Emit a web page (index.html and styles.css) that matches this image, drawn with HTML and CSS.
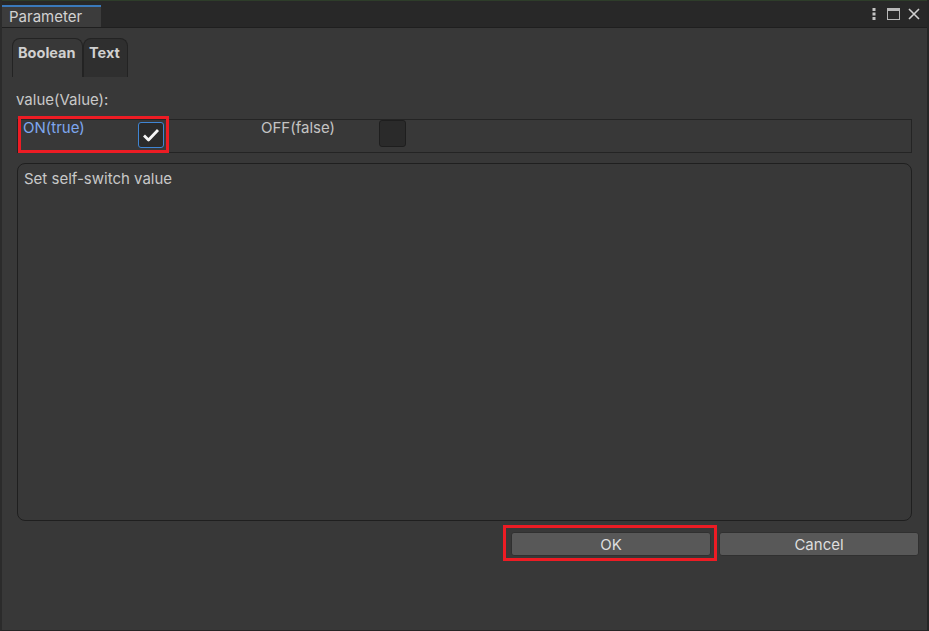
FILE: index.html
```html
<!DOCTYPE html>
<html lang="en">
  <head>
    <meta name="viewport" content="width=device-width, initial-scale=1.0" />
    <link rel="stylesheet" href="styles.css">
  </head>
  <body>
    <div class="window">
      <div class="titlebar">
        <div class="title-tab">Parameter</div>
        <div class="title-icons">
          <svg class="kebab" width="6" height="14" viewBox="0 0 6 14">
            <rect x="1.5" y="1" width="3" height="3" fill="#c4c4c4" />
            <rect x="1.5" y="5.5" width="3" height="3" fill="#c4c4c4" />
            <rect x="1.5" y="10" width="3" height="3" fill="#c4c4c4" />
          </svg>
          <svg width="13" height="12" viewBox="0 0 13 12">
            <rect x="0.5" y="0.5" width="12" height="11" fill="none" stroke="#b8b8b8" />
            <rect x="0.5" y="0.5" width="12" height="2.5" fill="#b8b8b8" />
          </svg>
          <svg width="12" height="12" viewBox="0 0 12 12">
            <path d="M1 1 L11 11 M11 1 L1 11" stroke="#d0d0d0" stroke-width="1.6" />
          </svg>
        </div>
      </div>

      <div class="content">
        <div class="tabs">
          <div class="tab active">Boolean</div>
          <div class="tab">Text</div>
        </div>

        <div class="field-label">value(Value):</div>
        <div class="choice-row">
          <div class="option marked">
            <span class="option-label focused">ON(true)</span>
            <span class="checkbox checked">
              <svg width="18" height="14" viewBox="0 0 18 14">
                <path d="M2 7.5 L6.5 12 L16 2" fill="none" stroke="#f4f4f4" stroke-width="2.8" stroke-linejoin="round" />
              </svg>
            </span>
          </div>
          <div class="option off">
            <span class="option-label">OFF(false)</span>
            <span class="checkbox"></span>
          </div>
        </div>

        <div class="description">Set self-switch value</div>

        <div class="buttons">
          <span class="marked-btn"><button class="btn ok">OK</button></span>
          <button class="btn cancel">Cancel</button>
        </div>
      </div>
    </div>
  </body>
</html>
```

FILE: styles.css
```css
html, body {
  margin: 0;
  padding: 0;
  background-color: #383838;
}

body {
  width: 929px;
  height: 631px;
  overflow: hidden;
  font-family: Inter, "Noto Sans", sans-serif;
  font-size: 15px;
  color: #c4c4c4;
}

.window {
  height: 630px;
  border-left: 2px solid #2b2b2b;
  border-right: 2px solid #262626;
  border-bottom: 1px solid #262626;
  background-color: #383838;
  display: flex;
  flex-direction: column;
}

/* Title strip */
.titlebar {
  height: 28px;
  background-color: #282828;
  border-top: 1px solid #2e3d2a;
  border-bottom: 1px solid #1f1f1f;
  box-sizing: border-box;
  display: flex;
  align-items: flex-end;
  justify-content: space-between;
}

.title-tab {
  width: 99px;
  height: 22px;
  box-sizing: border-box;
  background-color: #3c3c3c;
  border-top: 2px solid #3a79bb;
  padding-left: 7px;
  font-size: 15px;
  line-height: 19px;
  color: #d2d2d2;
}

.title-icons {
  display: flex;
  align-items: center;
  gap: 8px;
  height: 26px;
  padding-right: 7px;
}

.kebab {
  margin-right: 2px;
}

/* Body */
.content {
  flex: 1;
  display: flex;
  flex-direction: column;
  padding: 10px 8px 0 15px;
}

.tabs {
  display: flex;
  margin-left: -5px;
  gap: 0;
}

.tab {
  height: 39px;
  box-sizing: border-box;
  padding: 5px 5px 0;
  border: 1px solid #232323;
  border-bottom: none;
  border-radius: 8px 8px 0 0;
  background-color: #2f2f2f;
  font-weight: bold;
  font-size: 14.5px;
  color: #d0d0d0;
}

.tab.active {
  width: 71px;
  background-color: #383838;
}

.tab:not(.active) {
  width: 45px;
}

.field-label {
  margin-top: 14px;
  margin-left: -1px;
  line-height: 18px;
  color: #c8c8c8;
}

.choice-row {
  margin-top: 10px;
  margin-right: 7px;
  height: 34px;
  box-sizing: border-box;
  border: 1px solid #242424;
  display: flex;
}

.option {
  display: flex;
  align-items: flex-start;
  height: 30px;
  box-sizing: border-box;
}

.option.marked {
  width: 145px;
  height: 31px;
  margin-left: 3px;
  margin-top: -1px;
  outline: 3px solid #ed1c24;
  padding-left: 2px;
  padding-top: 1px;
}

.option.off {
  margin-left: 95px;
  padding-top: 0;
}

.option-label {
  display: inline-block;
  width: 115px;
  line-height: 16px;
}

.option.off .option-label {
  width: 118px;
}

.option-label.focused {
  color: #7ea7ef;
}

.checkbox {
  width: 27px;
  height: 27px;
  box-sizing: border-box;
  border: 1px solid #1e1e1e;
  border-radius: 3px;
  background-color: #2a2a2a;
  display: flex;
  align-items: center;
  justify-content: center;
}

.option.off .checkbox {
  margin-top: 0;
}

.checkbox.checked {
  width: 26px;
  height: 26px;
  margin-top: 2px;
  border-color: #3f85d4;
}

.description {
  margin-top: 10px;
  margin-right: 7px;
  height: 358px;
  box-sizing: border-box;
  border: 1px solid #1f1f1f;
  border-radius: 8px;
  padding: 6px 6px;
  line-height: 17px;
  color: #c8c8c8;
}

.buttons {
  margin-top: 4px;
  display: flex;
  justify-content: flex-end;
  gap: 2px;
}

.marked-btn {
  display: inline-flex;
  border: 3px solid #ed1c24;
  padding: 4px 3px 2px 5px;
}

.btn {
  width: 200px;
  height: 24px;
  box-sizing: border-box;
  border: 1px solid #303030;
  border-radius: 3px;
  background-color: #585858;
  color: #dedede;
  font-family: Inter, "Noto Sans", sans-serif;
  font-size: 15px;
  padding: 0;
}

.btn.cancel {
  margin-top: 7px;
}
```
